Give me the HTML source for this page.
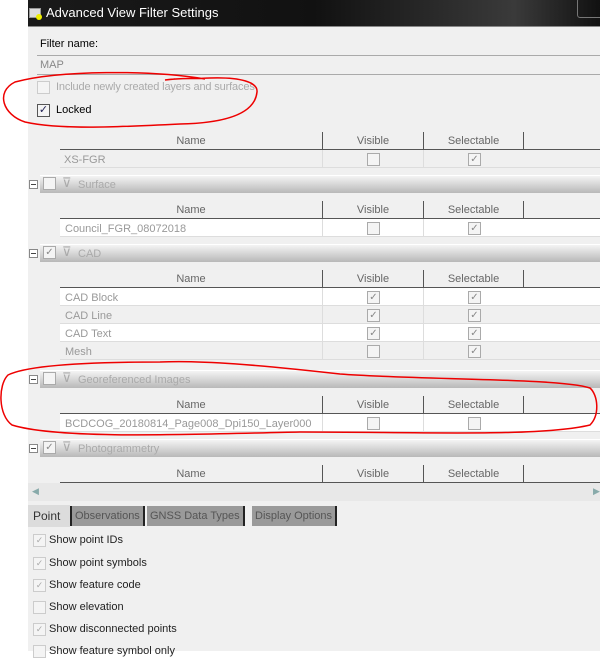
<!DOCTYPE html><html><head><style>
*{margin:0;padding:0;box-sizing:border-box}
body{width:600px;height:651px;overflow:hidden;background:#fff;font-family:"Liberation Sans",sans-serif;font-size:11px;position:relative}
.a{position:absolute}
.bg{left:28px;top:27px;width:572px;height:624px;background:#f0f0f0}
.title{left:28px;top:0;width:572px;height:27px;background:linear-gradient(90deg,#1a1a1a 0%,#111 50%,#3a3a3a 85%,#111 100%);color:#fff;font-size:13px;padding:5px 0 0 18px;border-bottom:1px solid #888}
.cb{width:13px;height:13px;border:1px solid #aaa;background:#f4f4f4}
.hdr{height:18px;background:#f0f0f0;border-bottom:1px solid #555;color:#666}
.hdr div,.row div{position:absolute;top:0;height:100%;text-align:center;line-height:18px}
.row{height:18px;background:#fff;border-bottom:1px solid #ddd;color:#999}
.row div{line-height:20px}
.row.alt{background:#f0f0f0}
.bar{left:40px;width:560px;height:18px;background:linear-gradient(#f4f4f4,#d0d0d0 60%,#b8b8b8);color:#aaa;font-size:11px;line-height:18px;padding-left:38px;border-top:1px solid #fff}
.minus{width:9px;height:9px;border:1px solid #888;background:#fff}
.minus:after{content:"";position:absolute;left:1px;top:3px;width:5px;height:1px;background:#444}
.ck{font-size:10px;color:#888;text-align:center;line-height:11px}
.tab{top:506px;height:20px;background:#9a9a9a;color:#555;font-size:11px;line-height:20px;padding:0 3px;border-right:2px solid #222}
.opt{left:33px;color:#222;font-size:11px}
.opt .cb{position:absolute;left:0;top:0;width:13px;height:13px;border:1px solid #ccc;color:#aaa;font-size:9px;text-align:center;line-height:11px}
.opt span{position:absolute;left:16px;top:0;white-space:nowrap}
</style></head><body>
<div class="a bg"></div>
<div class="a title">Advanced View Filter Settings</div>
<div class="a" style="left:29px;top:8px;width:12px;height:10px;background:#ddd;border:1px solid #999"></div>
<div class="a" style="left:36px;top:14px;width:6px;height:6px;background:#ee0;border-radius:50%"></div>
<div class="a" style="left:577px;top:-2px;width:30px;height:20px;border:1px solid #777;border-radius:3px"></div>
<div class="a" style="left:40px;top:38px;font-size:11px">Filter name:</div>
<div class="a" style="left:37px;top:55px;width:563px;height:20px;border-top:1px solid #aaa;border-bottom:1px solid #aaa;background:#f0f0f0;color:#888;padding:3px 0 0 3px;font-size:11px">MAP</div>
<div class="a cb" style="left:37px;top:81px;border-color:#ccc"></div>
<div class="a" style="left:56px;top:81px;color:#aaa;letter-spacing:-0.15px">Include newly created layers and surfaces</div>
<div class="a cb ck" style="left:37px;top:104px;border-color:#555;color:#225;font-size:11px">✓</div>
<div class="a" style="left:56px;top:104px">Locked</div>

<div class="a" style="left:60px;top:132px;width:540px">
<div class="a hdr" style="width:540px;top:0"><div style="left:0;width:262px">Name</div><div style="left:262px;width:101px;border-left:1px solid #555">Visible</div><div style="left:363px;width:100px;border-left:1px solid #555">Selectable</div><div style="left:463px;width:77px;border-left:1px solid #555"></div></div>
<div class="a row alt" style="width:540px;top:18px"><div style="left:4px;text-align:left">XS-FGR</div><div style="left:262px;width:101px;border-left:1px solid #ddd"><span class="a cb" style="left:44px;top:3px"></span></div><div style="left:363px;width:100px;border-left:1px solid #ddd"><span class="a cb ck" style="left:44px;top:3px">✓</span></div></div>
</div>

<div class="a minus" style="left:29px;top:180px"></div>
<div class="a bar" style="top:175px">Surface</div>
<div class="a cb" style="left:43px;top:177px"></div>
<div class="a" style="left:62px;top:175px;color:#aaa;font-size:13px">⊽</div>
<div class="a" style="left:60px;top:201px;width:540px">
<div class="a hdr" style="width:540px;top:0"><div style="left:0;width:262px">Name</div><div style="left:262px;width:101px;border-left:1px solid #555">Visible</div><div style="left:363px;width:100px;border-left:1px solid #555">Selectable</div><div style="left:463px;width:77px;border-left:1px solid #555"></div></div>
<div class="a row" style="width:540px;top:18px"><div style="left:5px;text-align:left">Council_FGR_08072018</div><div style="left:262px;width:101px;border-left:1px solid #ddd"><span class="a cb" style="left:44px;top:3px"></span></div><div style="left:363px;width:100px;border-left:1px solid #ddd"><span class="a cb ck" style="left:44px;top:3px">✓</span></div></div>
</div>

<div class="a minus" style="left:29px;top:249px"></div>
<div class="a bar" style="top:244px">CAD</div>
<div class="a cb ck" style="left:43px;top:246px">✓</div>
<div class="a" style="left:62px;top:244px;color:#aaa;font-size:13px">⊽</div>
<div class="a" style="left:60px;top:270px;width:540px">
<div class="a hdr" style="width:540px;top:0"><div style="left:0;width:262px">Name</div><div style="left:262px;width:101px;border-left:1px solid #555">Visible</div><div style="left:363px;width:100px;border-left:1px solid #555">Selectable</div><div style="left:463px;width:77px;border-left:1px solid #555"></div></div>
<div class="a row" style="width:540px;top:18px"><div style="left:5px;text-align:left">CAD Block</div><div style="left:262px;width:101px;border-left:1px solid #ddd"><span class="a cb ck" style="left:44px;top:3px">✓</span></div><div style="left:363px;width:100px;border-left:1px solid #ddd"><span class="a cb ck" style="left:44px;top:3px">✓</span></div></div>
<div class="a row alt" style="width:540px;top:36px"><div style="left:5px;text-align:left">CAD Line</div><div style="left:262px;width:101px;border-left:1px solid #ddd"><span class="a cb ck" style="left:44px;top:3px">✓</span></div><div style="left:363px;width:100px;border-left:1px solid #ddd"><span class="a cb ck" style="left:44px;top:3px">✓</span></div></div>
<div class="a row" style="width:540px;top:54px"><div style="left:5px;text-align:left">CAD Text</div><div style="left:262px;width:101px;border-left:1px solid #ddd"><span class="a cb ck" style="left:44px;top:3px">✓</span></div><div style="left:363px;width:100px;border-left:1px solid #ddd"><span class="a cb ck" style="left:44px;top:3px">✓</span></div></div>
<div class="a row alt" style="width:540px;top:72px"><div style="left:5px;text-align:left">Mesh</div><div style="left:262px;width:101px;border-left:1px solid #ddd"><span class="a cb" style="left:44px;top:3px"></span></div><div style="left:363px;width:100px;border-left:1px solid #ddd"><span class="a cb ck" style="left:44px;top:3px">✓</span></div></div>
</div>

<div class="a minus" style="left:29px;top:375px"></div>
<div class="a bar" style="top:370px">Georeferenced Images</div>
<div class="a cb" style="left:43px;top:372px"></div>
<div class="a" style="left:62px;top:370px;color:#aaa;font-size:13px">⊽</div>
<div class="a" style="left:60px;top:396px;width:540px">
<div class="a hdr" style="width:540px;top:0"><div style="left:0;width:262px">Name</div><div style="left:262px;width:101px;border-left:1px solid #555">Visible</div><div style="left:363px;width:100px;border-left:1px solid #555">Selectable</div><div style="left:463px;width:77px;border-left:1px solid #555"></div></div>
<div class="a row" style="width:540px;top:18px"><div style="left:5px;text-align:left">BCDCOG_20180814_Page008_Dpi150_Layer000</div><div style="left:262px;width:101px;border-left:1px solid #ddd"><span class="a cb" style="left:44px;top:3px"></span></div><div style="left:363px;width:100px;border-left:1px solid #ddd"><span class="a cb" style="left:44px;top:3px"></span></div></div>
</div>

<div class="a minus" style="left:29px;top:444px"></div>
<div class="a bar" style="top:439px">Photogrammetry</div>
<div class="a cb ck" style="left:43px;top:441px">✓</div>
<div class="a" style="left:62px;top:439px;color:#aaa;font-size:13px">⊽</div>
<div class="a" style="left:60px;top:465px;width:540px">
<div class="a hdr" style="width:540px;top:0"><div style="left:0;width:262px">Name</div><div style="left:262px;width:101px;border-left:1px solid #555">Visible</div><div style="left:363px;width:100px;border-left:1px solid #555">Selectable</div><div style="left:463px;width:77px;border-left:1px solid #555"></div></div>
</div>
<div class="a" style="left:28px;top:483px;width:572px;height:18px;background:#e8e8e8"></div>
<div class="a" style="left:32px;top:486px;color:#8aa;font-size:9px">◀</div>
<div class="a" style="left:593px;top:486px;color:#8aa;font-size:9px">▶</div>

<div class="a" style="left:28px;top:505px;width:42px;height:22px;background:#dcdcdc;padding:4px 0 0 5px;font-size:12px;color:#333">Point</div>
<div class="a tab" style="left:70px;border-left:2px solid #222">Observations</div>
<div class="a tab" style="left:147px">GNSS Data Types</div>
<div class="a tab" style="left:252px">Display Options</div>

<div class="a opt" style="top:534px"><div class="cb">✓</div><span>Show point IDs</span></div>
<div class="a opt" style="top:557px"><div class="cb">✓</div><span>Show point symbols</span></div>
<div class="a opt" style="top:579px"><div class="cb">✓</div><span>Show feature code</span></div>
<div class="a opt" style="top:601px"><div class="cb"></div><span>Show elevation</span></div>
<div class="a opt" style="top:623px"><div class="cb">✓</div><span>Show disconnected points</span></div>
<div class="a opt" style="top:645px"><div class="cb"></div><span>Show feature symbol only</span></div>

<svg class="a" style="left:0;top:0" width="600" height="651">
<g fill="none" stroke="#e00" stroke-width="1.5">
<path d="M205,79 C150,70 60,70 15,82 C-5,92 3,115 25,122 C60,130 120,127 180,124 C230,123 255,112 257,92 C258,82 240,77 210,78 C190,79 180,78 165,80 L175,79"/>
<path d="M160,362 C100,362 30,364 8,375 C-2,385 -2,415 12,425 C60,440 200,434 300,432 C420,432 540,437 590,425 C600,415 598,395 590,388 C560,378 420,380 340,374 C260,365 200,360 160,362"/>
</g></svg>
</body></html>
